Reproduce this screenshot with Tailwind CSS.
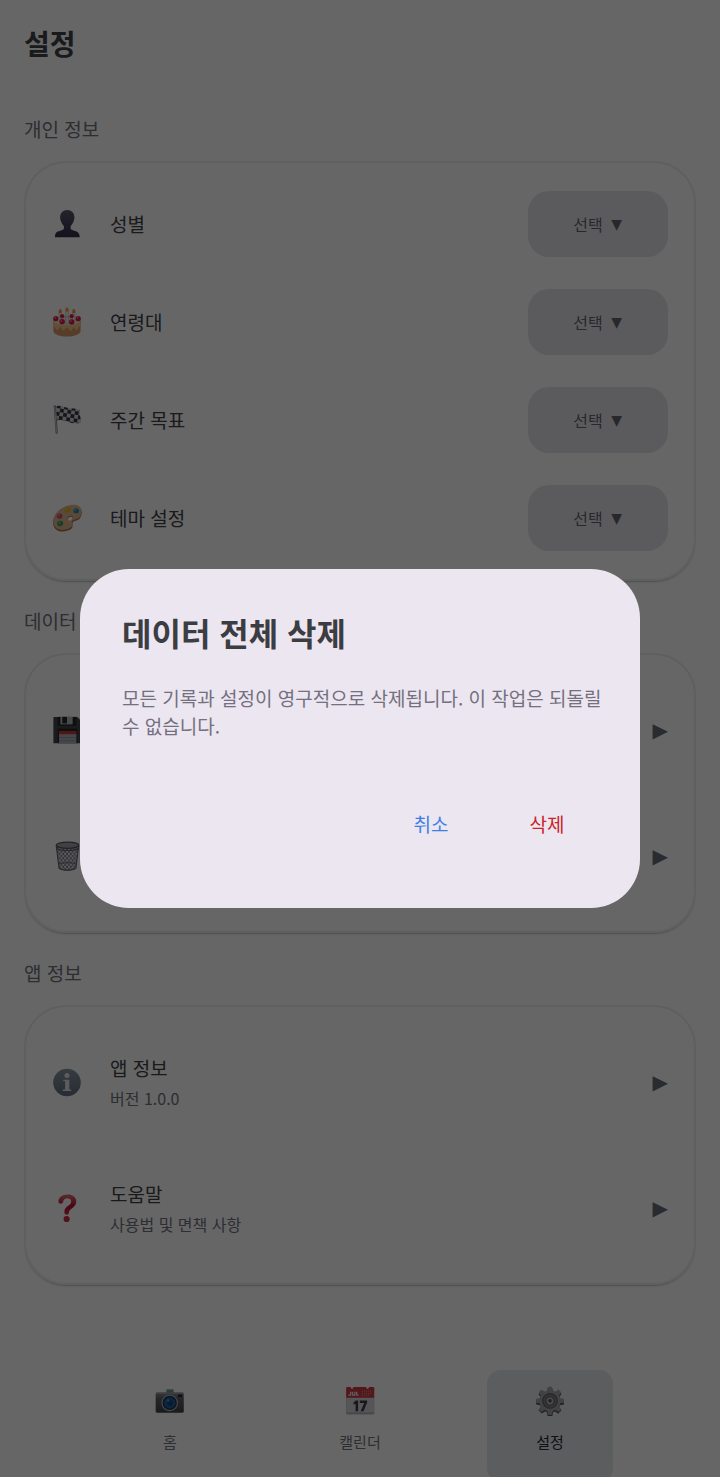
<!DOCTYPE html>
<html lang="ko">
<head>
<meta charset="utf-8">
<meta name="viewport" content="width=device-width, initial-scale=1">
<title>설정</title>
<script src="https://cdn.jsdelivr.net/npm/@tailwindcss/browser@4"></script>
</head>
<body class="bg-white text-[#404248] font-['Noto_Sans_CJK_KR',sans-serif]">
<div class="flex min-h-screen flex-col">
  <header class="px-6 pt-[19px]">
    <h1 class="text-[28px] leading-12 font-bold">설정</h1>
  </header>

  <main class="flex flex-col px-6 pt-[30px]">
    <h2 class="flex h-16 items-center text-[19px] leading-7 text-[#70737d]">개인 정보</h2>
    <section class="rounded-[42px] border-2 border-[#eceef0] py-3 shadow-[0_2px_2px_-1px_rgba(0,0,0,0.25)]">
      <div class="flex h-[98px] items-center px-[26px]">
        <svg class="size-[30px] shrink-0" viewBox="0 0 32 32" aria-hidden="true">
          <defs><linearGradient id="bust" x1="0" y1="0" x2="0" y2="1"><stop offset="0" stop-color="#5b5a70"/><stop offset="1" stop-color="#332e48"/></linearGradient></defs>
          <path fill="url(#bust)" d="M16.300 1c-4.600 0-7.600 3.200-7.600 7.600 0 2 .2 3 .8 4.300.8 2.400 1.700 4 3.200 5.200v2.600c0 1.500-3.400 2.100-5.800 3-2.700 1.100-3.800 2.600-3.800 6.300h26.400c0-3.500-1.100-5-3.800-6.300-2.400-.9-5.800-1.500-5.800-3v-2.600c1.500-1.200 2.400-2.800 3.200-5.200.6-1.300.8-2.300.8-4.300 0-4.400-3-7.600-7.600-7.600z"/>
        </svg>
        <label for="gender" class="ml-7 flex-1 text-[19px] leading-7">성별</label>
        <div class="relative text-[#65656f]">
          <select id="gender" class="block h-[66px] w-[140px] appearance-none rounded-[21px] bg-[#e3e3e8] pr-5 text-center text-base"><option>선택</option></select>
          <span class="pointer-events-none absolute inset-y-0 right-[46px] flex items-center font-['DejaVu_Sans',sans-serif] text-sm" aria-hidden="true">▼</span>
        </div>
      </div>
      <div class="flex h-[98px] items-center px-[26px]">
        <svg class="size-[30px] shrink-0" viewBox="0 0 32 32" aria-hidden="true">
          <path fill="#d99a62" d="M1.500 14v11.500C2 29 8 31.500 16 31.500S30 29 30.500 25.500V14z"/>
          <path fill="#efc28d" d="M1.500 14v6c.8 2 2 1.800 3 3.800 1 1.500 2.600.6 3-1.300.5-1.500 2-1.200 2.500.5.6 2.700 3.600 2.700 4.200.3.600-1.600 2.800-1.600 3.400 0 .6 2.700 3.800 2.700 4.400 0 .5-1.700 2-2 2.500-.5.6 2 2.300 2.400 3 .5.800-1.800 2.300-2 3-3.800V14z"/>
          <ellipse cx="16" cy="14" rx="14.500" ry="5.500" fill="#fae3c2"/>
          <g fill="#f1eef5" stroke="#a9a7bd" stroke-width=".5"><rect x="7.500" y="6" width="2.500" height="8"/><rect x="14.700" y="4" width="2.700" height="7"/><rect x="22" y="6" width="2.500" height="8"/><rect x="15" y="10" width="2.700" height="8"/></g>
          <g fill="#d9204d"><circle cx="4" cy="12.500" r="2.800"/><circle cx="10.800" cy="9.800" r="2.300"/><circle cx="21" cy="9.800" r="2.300"/><circle cx="28" cy="12.500" r="2.800"/><circle cx="10.800" cy="15.800" r="2.900"/><circle cx="21" cy="16" r="2.900"/></g>
          <g fill="#ff9aae"><circle cx="3.300" cy="11.500" r=".8"/><circle cx="10" cy="14.800" r=".8"/><circle cx="20.200" cy="15" r=".8"/><circle cx="27.300" cy="11.500" r=".8"/></g>
          <g fill="#f3a02c"><path d="M8.800 1.500c3 3 1.800 5 0 5s-3-2 0-5z"/><path d="M16 0c3 3 1.800 4.800 0 4.800S13 3 16 0z"/><path d="M23.300 1.500c3 3 1.800 5 0 5s-3-2 0-5z"/></g>
        </svg>
        <label for="age" class="ml-7 flex-1 text-[19px] leading-7">연령대</label>
        <div class="relative text-[#65656f]">
          <select id="age" class="block h-[66px] w-[140px] appearance-none rounded-[21px] bg-[#e3e3e8] pr-5 text-center text-base"><option>선택</option></select>
          <span class="pointer-events-none absolute inset-y-0 right-[46px] flex items-center font-['DejaVu_Sans',sans-serif] text-sm" aria-hidden="true">▼</span>
        </div>
      </div>
      <div class="flex h-[98px] items-center px-[26px]">
        <svg class="size-[30px] shrink-0" viewBox="0 0 32 32" aria-hidden="true">
          <defs><clipPath id="flag"><path d="M4 1.500c4-1.600 8 .3 12 1.500 4 1.300 8.500.6 13 1.700L31 19c-4.500 1.600-8.500.7-12.500-.5-4.500-1.400-8.500-3.500-13-2z"/></clipPath></defs>
          <path d="M3 1.500 5 29.500" stroke="#85858f" stroke-width="2.400" stroke-linecap="round"/>
          <path d="M2.800 2 4.800 29.500" stroke="#d5d5dd" stroke-width="1"/>
          <g clip-path="url(#flag)"><path fill="#d4d4da" d="M0 0h32v24H0z"/>
            <g fill="#3b3b41" transform="rotate(9 16 10)"><path d="M0 -3h4v4H0zM8-3h4v4H8zM16-3h4v4h-4zM24-3h4v4h-4zM4 1h4v4H4zM12 1h4v4h-4zM20 1h4v4h-4zM28 1h4v4h-4zM8 5h4v4H8zM16 5h4v4h-4zM24 5h4v4h-4zM4 9h4v4H4zM12 9h4v4h-4zM20 9h4v4h-4zM28 9h4v4h-4zM8 13h4v4H8zM16 13h4v4h-4zM24 13h4v4h-4zM4 17h4v4H4zM12 17h4v4h-4zM20 17h4v4h-4zM28 17h4v4h-4z"/></g>
          </g>
        </svg>
        <label for="goal" class="ml-7 flex-1 text-[19px] leading-7">주간 목표</label>
        <div class="relative text-[#65656f]">
          <select id="goal" class="block h-[66px] w-[140px] appearance-none rounded-[21px] bg-[#e3e3e8] pr-5 text-center text-base"><option>선택</option></select>
          <span class="pointer-events-none absolute inset-y-0 right-[46px] flex items-center font-['DejaVu_Sans',sans-serif] text-sm" aria-hidden="true">▼</span>
        </div>
      </div>
      <div class="flex h-[98px] items-center px-[26px]">
        <svg class="size-[30px] shrink-0" viewBox="0 0 32 32" aria-hidden="true">
          <g transform="translate(.8 .4) scale(.98)">
          <path fill="#a96c3e" fill-rule="evenodd" d="M22 2.500c6-.5 9.800 3 9.500 8-.3 5.500-3.500 8-7 8.500-3.500.6-3 2.500-3 6C21.500 29 14 31 9.500 30.500 3 30 0 25.500.5 19.500 1.200 10 12 3 22 2.500zM19.500 14.500c-2 .3-3.800 2-3.300 3.800.5 1.600 3.200 1.500 4.600.2 1.600-1.600 1.200-4.300-1.300-4z"/>
          <path fill="#e0b68c" fill-rule="evenodd" d="M22 1.500c6-.5 9.800 3 9.300 8-.3 5.500-3.500 7.500-7 8-3.500.6-4 2.500-3 6 .8 3.200-7.300 6-11.800 5.500C3 28.500.3 24.500.8 18.500 1.500 9 12 2 22 1.500zM19.500 13.500c-2.300.3-3.900 2.200-3.400 4 .5 1.700 3.400 1.600 4.800.3 1.700-1.700 1.200-4.700-1.400-4.300z"/>
          <ellipse cx="16" cy="7" rx="3.200" ry="2.900" fill="#d9b32c"/><ellipse cx="25.500" cy="8" rx="3" ry="2.800" fill="#2c86b8"/><ellipse cx="7.500" cy="13.800" rx="3.200" ry="2.900" fill="#ce5272"/><ellipse cx="8" cy="22" rx="3.400" ry="3" fill="#459b5d"/>
          <g fill="#fff" opacity=".4"><circle cx="15" cy="6" r="1"/><circle cx="24.500" cy="7" r="1"/><circle cx="6.500" cy="13" r="1"/><circle cx="7" cy="21" r="1"/></g>
          </g>
        </svg>
        <label for="theme" class="ml-7 flex-1 text-[19px] leading-7">테마 설정</label>
        <div class="relative text-[#65656f]">
          <select id="theme" class="block h-[66px] w-[140px] appearance-none rounded-[21px] bg-[#e3e3e8] pr-5 text-center text-base"><option>선택</option></select>
          <span class="pointer-events-none absolute inset-y-0 right-[46px] flex items-center font-['DejaVu_Sans',sans-serif] text-sm" aria-hidden="true">▼</span>
        </div>
      </div>
    </section>

    <h2 class="mt-2 flex h-16 items-center text-[19px] leading-7 text-[#70737d]">데이터</h2>
    <section class="rounded-[42px] border-2 border-[#eceef0] py-3 shadow-[0_2px_2px_-1px_rgba(0,0,0,0.25)]">
      <button type="button" aria-label="데이터 저장" class="flex h-[126px] w-full items-center justify-between px-[26px]">
        <svg class="size-[30px] shrink-0" viewBox="0 0 32 32" aria-hidden="true">
          <path fill="#42444a" d="M1.500 2H27l4 4v24H1.500z"/>
          <path fill="#25262b" d="M6 2h20v9.500H6z"/><path fill="#b9bac3" d="M9 2h13v8H9z"/><path fill="#25262b" d="M11 2h5v7h-5z"/>
          <path fill="#25262b" d="M6 14.500h21V30H6z"/><path fill="#c93838" d="M7.500 17H26v5H7.500z"/><path fill="#b0b1bd" d="M7.500 20.500H26V30H7.500z"/><path stroke="#8c8d98" stroke-width=".8" d="M7.500 24H26M7.500 27.500H26"/>
        </svg>
        <span class="font-['DejaVu_Sans',sans-serif] text-xl leading-7 text-[#686b76]">▶</span>
      </button>
      <button type="button" aria-label="데이터 전체 삭제" class="flex h-[126px] w-full items-center justify-between px-[26px]">
        <svg class="size-[30px] shrink-0" viewBox="0 0 32 32" aria-hidden="true">
          <defs><pattern id="mesh" width="4" height="4.600" patternUnits="userSpaceOnUse"><path d="M0 0l4 4.600M4 0L0 4.600" stroke="#65656f" stroke-width=".9"/></pattern></defs>
          <path fill="#d3d3da" opacity=".5" d="M4.500 5h24l-3 24.500c-3 2-15 2-18 0z"/>
          <path fill="url(#mesh)" d="M4.500 5h24l-3 24.500c-3 2-15 2-18 0z"/>
          <path fill="none" stroke="#62626c" stroke-width="1.100" d="M4.500 5l3 24c3 2.800 15 2.800 18 0l3-24"/>
          <ellipse cx="16.500" cy="4.500" rx="12" ry="3.300" fill="#a2a2ac" stroke="#55555d" stroke-width="1.200"/>
          <path fill="none" stroke="#65656f" stroke-width="1.200" d="M4.500 8c4 2.800 20 2.800 24 0"/>
          <path fill="none" stroke="#68688a" stroke-width="1" d="M7 25c4-2.500 15-2.500 19 0M7.500 29c3 2.800 15 2.800 18 0"/>
        </svg>
        <span class="font-['DejaVu_Sans',sans-serif] text-xl leading-7 text-[#686b76]">▶</span>
      </button>
    </section>

    <h2 class="mt-2 flex h-16 items-center text-[19px] leading-7 text-[#70737d]">앱 정보</h2>
    <section class="rounded-[42px] border-2 border-[#eceef0] py-3 shadow-[0_2px_2px_-1px_rgba(0,0,0,0.25)]">
      <button type="button" class="flex h-[126px] w-full items-center px-[26px] text-left">
        <svg class="size-[30px] shrink-0" viewBox="0 0 32 32" aria-hidden="true">
          <defs><linearGradient id="info" x1="0" y1="0" x2="0" y2="1"><stop offset="0" stop-color="#8799a3"/><stop offset="1" stop-color="#626f82"/></linearGradient></defs>
          <circle cx="16" cy="16.500" r="14.700" fill="url(#info)"/>
          <g fill="#e6e6ea"><circle cx="16" cy="9" r="2.700"/><path d="M12 13.500h6.500V24h2v1.500h-9V24H14v-9h-2z"/></g>
        </svg>
        <span class="ml-7 flex flex-1 flex-col gap-1">
          <span class="text-[19px] leading-7">앱 정보</span>
          <span class="text-base leading-6 text-[#70737d]">버전 1.0.0</span>
        </span>
        <span class="font-['DejaVu_Sans',sans-serif] text-xl leading-7 text-[#686b76]">▶</span>
      </button>
      <button type="button" class="flex h-[126px] w-full items-center px-[26px] text-left">
        <svg class="size-[30px] shrink-0" viewBox="0 0 32 32" aria-hidden="true">
          <defs><linearGradient id="help" x1="0" y1="0" x2="0" y2="1"><stop offset="0" stop-color="#e06a72"/><stop offset=".6" stop-color="#b80f38"/><stop offset="1" stop-color="#d0284c"/></linearGradient></defs>
          <path fill="url(#help)" d="M16.500 1.500C10.800 1.500 7 4.600 6.800 9c0 2.900 4.400 3.200 5 .6.500-2.600 2.100-3.900 4.500-3.900 2.500 0 4.100 1.300 4.100 3.400 0 2.200-1.400 3.200-3.300 4.600-2.800 2.100-4.100 4.100-3.900 7.200.1 2.900 4.700 2.900 4.900.1.200-2.100.9-2.900 3-4.400 3.100-2.200 4.800-4.300 4.800-7.800C25.900 4.400 21.900 1.500 16.500 1.500z"/><circle cx="15.600" cy="27.700" r="3.300" fill="#cf2b4c"/>
        </svg>
        <span class="ml-7 flex flex-1 flex-col gap-1">
          <span class="text-[19px] leading-7">도움말</span>
          <span class="text-base leading-6 text-[#70737d]">사용법 및 면책 사항</span>
        </span>
        <span class="font-['DejaVu_Sans',sans-serif] text-xl leading-7 text-[#686b76]">▶</span>
      </button>
    </section>
  </main>

  <nav class="mt-auto flex h-[127px] justify-center gap-16 overflow-hidden pt-5 text-[15px] leading-6 text-[#70737d]">
    <a href="#home" class="flex h-28 w-[126px] flex-col items-center gap-3.5 rounded-[14px] pt-4">
      <svg class="size-[30px] shrink-0" viewBox="0 0 32 32" aria-hidden="true">
        <defs><linearGradient id="cam" x1="0" y1="0" x2="0" y2="1"><stop offset="0" stop-color="#8c8c92"/><stop offset=".3" stop-color="#606066"/><stop offset="1" stop-color="#434349"/></linearGradient></defs>
        <path fill="#8b9c9e" d="M12 3.500h8v5h-8z"/><path fill="#4a9c98" d="M13.500 5h5v2.500h-5z"/>
        <rect x=".7" y="7" width="30" height="21.500" rx="1.500" fill="url(#cam)"/><path fill="#a0a0a6" d="M2 7h27.500v1.500H2z"/><path fill="#2c2c31" d="M24.500 9h4.500v3h-4.500z"/>
        <circle cx="15.700" cy="18" r="8.800" fill="#b5b5bb"/><circle cx="15.700" cy="18" r="7.600" fill="#16375a"/><circle cx="15.700" cy="18" r="6" fill="#205f98"/><circle cx="16" cy="18" r="3" fill="#16407a"/><circle cx="14" cy="15.500" r="1.500" fill="#4a8bc0"/>
      </svg>
      <span>홈</span>
    </a>
    <a href="#calendar" class="flex h-28 w-[126px] flex-col items-center gap-3.5 rounded-[14px] pt-4">
      <svg class="size-[30px] shrink-0" viewBox="0 0 32 32" aria-hidden="true">
        <path fill="#b4b4c0" d="M1.200 12h30v17a1.500 1.500 0 0 1-1.500 1.500h-27A1.500 1.500 0 0 1 1.200 29z"/><path fill="#d6d6dc" d="M1.500 12h29.400v16H1.500z"/>
        <path fill="#cf3b43" d="M2.700 1h27a1.500 1.500 0 0 1 1.500 1.500v10h-30v-10A1.500 1.500 0 0 1 2.700 1z"/>
        <g fill="#fff"><circle cx="7.500" cy="1.500" r="1.400"/><circle cx="24" cy="1.500" r="1.400"/></g>
        <path fill="none" stroke="#eee" stroke-width="1.400" d="M6 6v3c0 1.300-2 1.300-2 0M8 6v3c0 1.400 2.500 1.400 2.500 0V6M12.500 6v3.700h2"/>
        <path stroke="#e39a9d" stroke-width=".9" stroke-dasharray="1.300 .9" d="M18 5.500h11M18 7.800h11M18 10h8"/>
        <path fill="#3c3c43" d="M11.500 15.500H14V27h-2.700v-8l-2.200 1v-2.500zM15.800 15.500h7.800v2.200L19.700 27h-3l3.800-9h-4.700z"/>
      </svg>
      <span>캘린더</span>
    </a>
    <a href="#settings" aria-current="page" class="flex h-28 w-[126px] flex-col items-center gap-3.5 rounded-[14px] bg-[#e5e8eb] pt-4 text-[#2b2b35]">
      <svg class="size-[30px] shrink-0" viewBox="0 0 32 32" aria-hidden="true">
        <g fill="#55555b"><circle cx="16" cy="17.500" r="11"/><path d="M13.500 2.500h5l1 6h-7zM13.500 32h5l1-6h-7z"/><path d="M13.500 2.500h5l1 6h-7zM13.500 32h5l1-6h-7z" transform="rotate(45 16 17.300)"/><path d="M13.500 2.500h5l1 6h-7zM13.500 32h5l1-6h-7z" transform="rotate(90 16 17.300)"/><path d="M13.500 2.500h5l1 6h-7zM13.500 32h5l1-6h-7z" transform="rotate(135 16 17.300)"/></g>
        <g fill="#a6a6ad"><circle cx="16" cy="15.700" r="11.300"/><path d="M14 .8h4l1 5h-6zM14 30.600h4l1-5h-6z"/><path d="M14 .8h4l1 5h-6zM14 30.600h4l1-5h-6z" transform="rotate(45 16 15.700)"/><path d="M14 .8h4l1 5h-6zM14 30.600h4l1-5h-6z" transform="rotate(90 16 15.700)"/><path d="M14 .8h4l1 5h-6zM14 30.600h4l1-5h-6z" transform="rotate(135 16 15.700)"/></g>
        <circle cx="16" cy="15.800" r="8.400" fill="#66666d"/><circle cx="16" cy="16" r="6.800" fill="#8a8a91"/><circle cx="16" cy="16" r="5.300" fill="#606067"/><circle cx="16" cy="16" r="3.900" fill="#b5b5bc"/><circle cx="16" cy="15.700" r="1.800" fill="#4d4d54"/>
      </svg>
      <span>설정</span>
    </a>
  </nav>
</div>

<div class="fixed inset-0 flex items-center justify-center bg-black/60 px-20">
  <div role="dialog" aria-modal="true" aria-labelledby="dialog-title" class="w-full max-w-[560px] rounded-[49px] bg-[#ece6f0] p-[42px]">
    <h2 id="dialog-title" class="text-[32px] leading-[43px] font-bold text-[#3c3c43]">데이터 전체 삭제</h2>
    <p class="-mr-2 mt-[30px] text-[19px] leading-7 break-keep text-[#737080]">모든 기록과 설정이 영구적으로 삭제됩니다. 이 작업은 되돌릴 수 없습니다.</p>
    <div class="mt-[42px] flex justify-end gap-3.5 text-[19px] leading-7">
      <button type="button" class="h-[84px] w-[102px] text-[#3f7fe5]">취소</button>
      <button type="button" class="h-[84px] w-[102px] text-[#cc2229]">삭제</button>
    </div>
  </div>
</div>
</body>
</html>
